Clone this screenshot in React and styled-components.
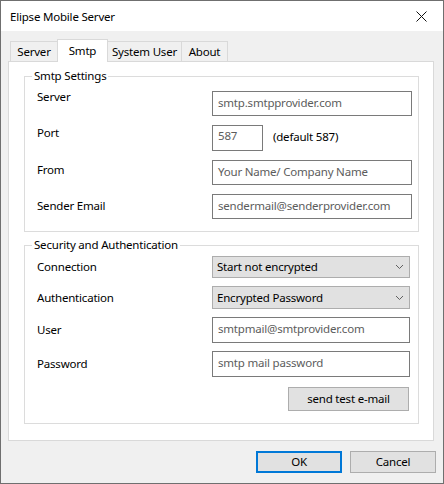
import React from "react";
import styled, { createGlobalStyle } from "styled-components";

/* Windows-style "Elipse Mobile Server" settings dialog, Smtp tab */

const GlobalStyle = createGlobalStyle`
    html, body {
        margin: 0;
        padding: 0;
        background: #ffffff;
    }
    * {
        box-sizing: border-box;
    }
`;

const FONT = `"Noto Sans", "Open Sans", sans-serif`;

const Window = styled.div`
    width: 444px;
    height: 484px;
    border: 1px solid #6f6f6f;
    display: flex;
    flex-direction: column;
    font-family: ${FONT};
    font-size: 11.5px;
    letter-spacing: -0.2px;
    color: #000000;
`;

const TitleBar = styled.div`
    height: 30px;
    background: #ffffff;
    display: flex;
    align-items: center;
    justify-content: space-between;
    padding: 0 9px 0 9px;
`;

const Title = styled.span`
    line-height: 16px;
    margin-top: 1px;
`;

const CloseButton = styled.div`
    width: 20px;
    height: 20px;
    display: flex;
    align-items: center;
    justify-content: center;
    margin-right: 3px;
`;

const Body = styled.div`
    flex: 1;
    background: #f0f0f0;
    padding: 8px 9px 0 7px;
    display: flex;
    flex-direction: column;
`;

const TabRow = styled.div`
    display: flex;
    align-items: flex-end;
    height: 22px;
    padding-left: 2px;
`;

const Tab = styled.div`
    position: relative;
    width: ${(p) => p.$width}px;
    height: ${(p) => (p.$active ? 23 : 20)}px;
    margin-bottom: ${(p) => (p.$active ? -1 : 0)}px;
    z-index: ${(p) => (p.$active ? 1 : 0)};
    background: ${(p) => (p.$active ? "#ffffff" : "#f0f0f0")};
    border: 1px solid #d9d9d9;
    border-bottom: none;
    margin-left: ${(p) => (p.$first ? 0 : -1)}px;
    display: flex;
    justify-content: center;
    align-items: ${(p) => (p.$active ? "flex-start" : "center")};
    padding-top: ${(p) => (p.$active ? 3 : 0)}px;
    line-height: 16px;
`;

const Panel = styled.div`
    height: 380px;
    background: #ffffff;
    border: 1px solid #d9d9d9;
    padding: 14px 14px 0 15px;
    display: flex;
    flex-direction: column;
    gap: 13px;
`;

const GroupBox = styled.div`
    position: relative;
    height: ${(p) => p.$height}px;
    border: 1px solid #dcdcdc;
    padding: ${(p) => p.$padTop}px 0 0 12px;
    display: flex;
    flex-direction: column;
    gap: ${(p) => p.$gap}px;
`;

const Legend = styled.span`
    position: absolute;
    top: -9px;
    left: 7px;
    padding: 0 2px;
    background: #ffffff;
    line-height: 16px;
`;

const Row = styled.div`
    display: flex;
    align-items: ${(p) => (p.$center ? "center" : "flex-start")};
    height: ${(p) => p.$height}px;
`;

const Label = styled.span`
    width: 175px;
    flex-shrink: 0;
    line-height: 16px;
    margin-top: ${(p) => p.$shift || 0}px;
`;

const TextBox = styled.div`
    width: ${(p) => p.$width}px;
    height: 100%;
    border: 1px solid #7a7a7a;
    background: #ffffff;
    color: #5c5c5c;
    padding: ${(p) => p.$padTop || 3}px 0 0 5px;
    line-height: 16px;
    white-space: nowrap;
    overflow: hidden;
`;

const Hint = styled.span`
    margin-left: 10px;
    line-height: 16px;
    margin-top: 4px;
`;

const ComboBox = styled.div`
    width: 198px;
    height: 100%;
    border: 1px solid #adadad;
    background: #e1e1e1;
    display: flex;
    align-items: center;
    justify-content: space-between;
    padding: 0 5px 0 4px;
    line-height: 16px;
`;

const ButtonRow = styled.div`
    display: flex;
    justify-content: flex-end;
    padding-right: 9px;
    margin-top: 2px;
`;

const Button = styled.div`
    width: ${(p) => p.$width}px;
    height: ${(p) => p.$height}px;
    border: ${(p) => (p.$default ? "2px solid #0078d7" : "1px solid #adadad")};
    background: #e1e1e1;
    display: flex;
    align-items: center;
    justify-content: center;
    line-height: 16px;
`;

const Footer = styled.div`
    display: flex;
    justify-content: flex-end;
    gap: 8px;
    margin-top: 10px;
    margin-right: -2px;
`;

const Chevron = () => (
    <svg width="9" height="6" viewBox="0 0 9 6">
        <polyline
            points="1,1 4.5,4.5 8,1"
            fill="none"
            stroke="#606060"
            strokeWidth="1"
        />
    </svg>
);

const CloseIcon = () => (
    <svg width="11" height="11" viewBox="0 0 11 11">
        <path d="M0.5 0.5 L10.5 10.5 M10.5 0.5 L0.5 10.5" stroke="#111111" strokeWidth="1" />
    </svg>
);

const tabs = [
    { id: "server", title: "Server", width: 48 },
    { id: "smtp", title: "Smtp", width: 51, active: true },
    { id: "user", title: "System User", width: 75 },
    { id: "about", title: "About", width: 47 }
];

export default function App() {
    return (
        <>
            <GlobalStyle />
            <Window>
                <TitleBar>
                    <Title>Elipse Mobile Server</Title>
                    <CloseButton>
                        <CloseIcon />
                    </CloseButton>
                </TitleBar>
                <Body>
                    <TabRow>
                        {tabs.map((t, i) => (
                            <Tab
                                key={t.id}
                                $width={t.width}
                                $active={t.active}
                                $first={i === 0}
                            >
                                {t.title}
                            </Tab>
                        ))}
                    </TabRow>
                    <Panel>
                        <GroupBox $height={156} $padTop={14} $gap={9}>
                            <Legend>Smtp Settings</Legend>
                            <Row $height={25}>
                                <Label $shift={-2}>Server</Label>
                                <TextBox $width={200}>smtp.smtpprovider.com</TextBox>
                            </Row>
                            <Row $height={26}>
                                <Label $shift={0}>Port</Label>
                                <TextBox $width={51} $padTop={2}>587</TextBox>
                                <Hint>(default 587)</Hint>
                            </Row>
                            <Row $height={25}>
                                <Label $shift={2}>From</Label>
                                <TextBox $width={200}>Your Name/ Company Name</TextBox>
                            </Row>
                            <Row $height={25}>
                                <Label $shift={4}>Sender Email</Label>
                                <TextBox $width={200}>sendermail@senderprovider.com</TextBox>
                            </Row>
                        </GroupBox>
                        <GroupBox $height={179} $padTop={10} $gap={8}>
                            <Legend>Security and Authentication</Legend>
                            <Row $height={22} $center>
                                <Label>Connection</Label>
                                <ComboBox>
                                    Start not encrypted
                                    <Chevron />
                                </ComboBox>
                            </Row>
                            <Row $height={23} $center>
                                <Label>Authentication</Label>
                                <ComboBox>
                                    Encrypted Password
                                    <Chevron />
                                </ComboBox>
                            </Row>
                            <Row $height={26} $center>
                                <Label>User</Label>
                                <TextBox $width={198}>smtpmail@smtprovider.com</TextBox>
                            </Row>
                            <Row $height={26} $center>
                                <Label>Password</Label>
                                <TextBox $width={198}>smtp mail password</TextBox>
                            </Row>
                            <ButtonRow>
                                <Button $width={121} $height={24}>
                                    send test e-mail
                                </Button>
                            </ButtonRow>
                        </GroupBox>
                    </Panel>
                    <Footer>
                        <Button $width={86} $height={22} $default>
                            OK
                        </Button>
                        <Button $width={86} $height={22}>
                            Cancel
                        </Button>
                    </Footer>
                </Body>
            </Window>
        </>
    );
}
